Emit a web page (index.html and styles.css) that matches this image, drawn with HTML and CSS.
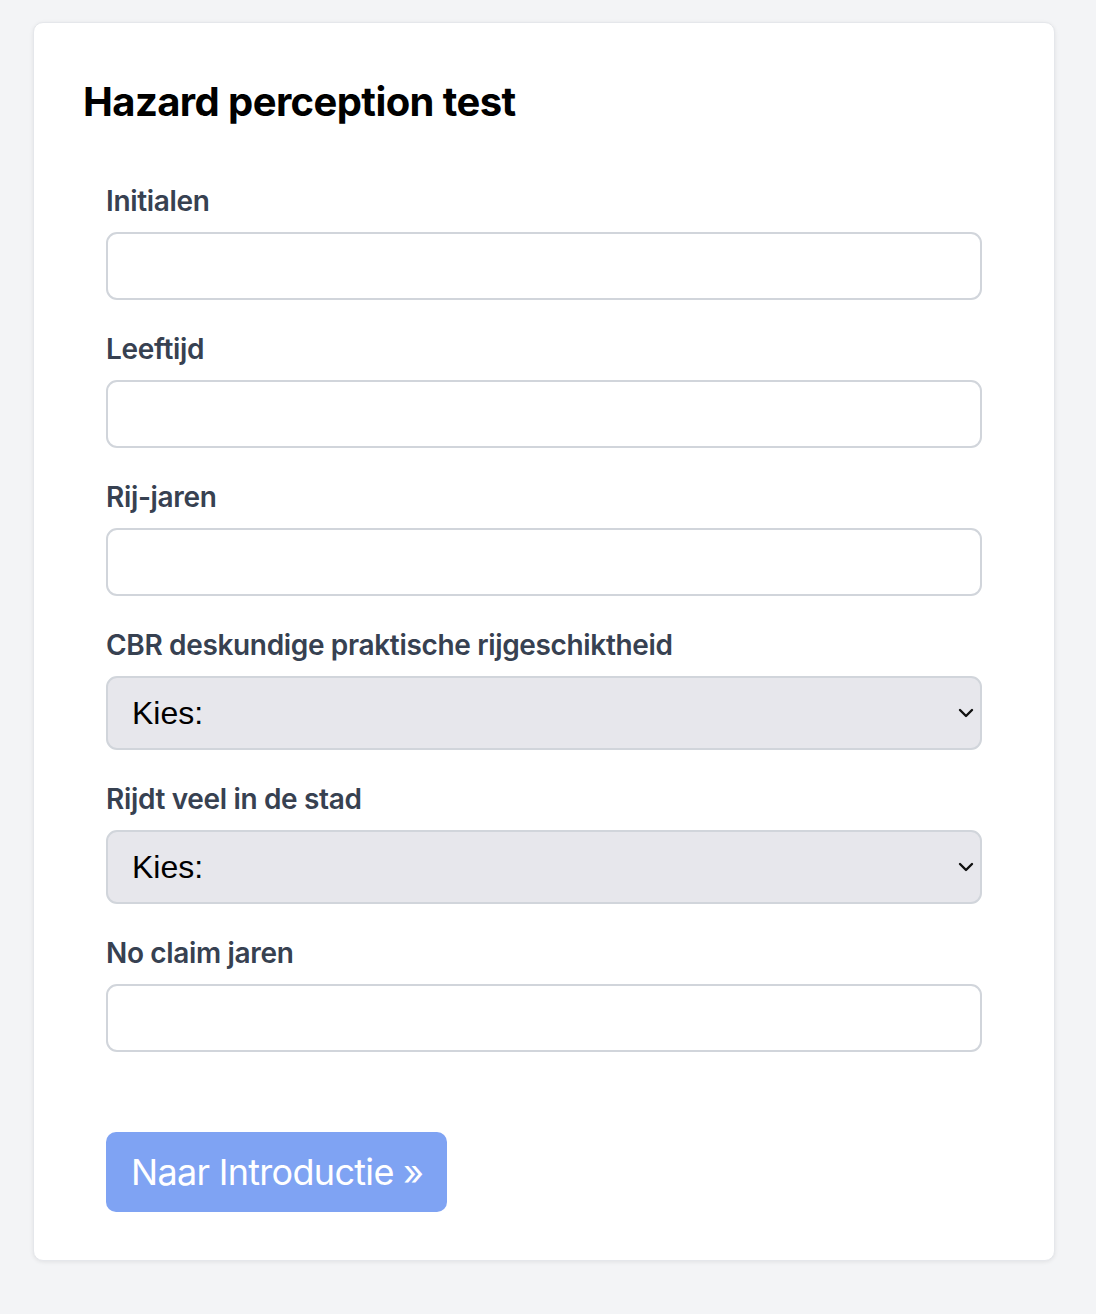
FILE: index.html
```html
<!DOCTYPE html>
<html lang="nl">
<head>
<meta charset="utf-8">
<title>Hazard perception test</title>
<link rel="stylesheet" href="styles.css">
</head>
<body>
<main class="page">
  <section class="card">
    <h1 class="title">Hazard perception test</h1>
    <form class="form">
      <div class="field">
        <label class="label" for="initialen">Initialen</label>
        <input class="input" id="initialen" type="text">
      </div>
      <div class="field">
        <label class="label" for="leeftijd">Leeftijd</label>
        <input class="input" id="leeftijd" type="text">
      </div>
      <div class="field">
        <label class="label" for="rijjaren">Rij-jaren</label>
        <input class="input" id="rijjaren" type="text">
      </div>
      <div class="field">
        <label class="label" for="cbr">CBR deskundige praktische rijgeschiktheid</label>
        <div class="select-wrap">
          <select class="select" id="cbr"><option>Kies:</option></select>
          <svg class="chevron" width="16" height="10" viewBox="0 0 16 10"><path d="M2 2 L8 8 L14 2" fill="none" stroke="#111" stroke-width="2.4" stroke-linecap="round" stroke-linejoin="round"/></svg>
        </div>
      </div>
      <div class="field">
        <label class="label" for="stad">Rijdt veel in de stad</label>
        <div class="select-wrap">
          <select class="select" id="stad"><option>Kies:</option></select>
          <svg class="chevron" width="16" height="10" viewBox="0 0 16 10"><path d="M2 2 L8 8 L14 2" fill="none" stroke="#111" stroke-width="2.4" stroke-linecap="round" stroke-linejoin="round"/></svg>
        </div>
      </div>
      <div class="field">
        <label class="label" for="noclaim">No claim jaren</label>
        <input class="input" id="noclaim" type="text">
      </div>
      <div class="actions">
        <button class="button" type="button" disabled>Naar Introductie »</button>
      </div>
    </form>
  </section>
</main>
</body>
</html>
```
FILE: styles.css
```css
html, body {
  margin: 0;
  padding: 0;
  background: #f3f4f6;
}
body {
  font-family: Inter, "Noto Sans", sans-serif;
  height: 1314px;
}
.page {
  padding: 22px 41px 0 33px;
}
.card {
  box-sizing: border-box;
  width: 1022px;
  background: #fff;
  border: 1px solid #e5e7eb;
  border-radius: 10px;
  box-shadow: 0 1px 4px rgba(0,0,0,0.08);
  padding: 51px 46px 48px 46px;
}
.title {
  margin: 0 0 51px 3px;
  font-size: 40px;
  line-height: 56px;
  font-weight: 700;
  color: #000;
  letter-spacing: -0.6px;
}
.form {
  padding: 0 26px;
  display: flex;
  flex-direction: column;
}
.field {
  display: flex;
  flex-direction: column;
  margin-bottom: 29px;
}
.label {
  font-size: 28px;
  line-height: 40px;
  font-weight: 600;
  color: #374151;
  margin-bottom: 11px;
  letter-spacing: -0.34px;
}
.input {
  box-sizing: border-box;
  height: 68px;
  width: 100%;
  border: 2px solid #d1d5db;
  border-radius: 11px;
  background: #fff;
  padding: 0 24px;
  font-size: 28px;
  outline: none;
}
.select-wrap {
  position: relative;
}
.select {
  box-sizing: border-box;
  width: 100%;
  height: 74px;
  -webkit-appearance: none;
  appearance: none;
  border: 2px solid #d1d5db;
  border-radius: 11px;
  background: #e7e7ec;
  padding: 0 24px;
  font-family: "Liberation Sans", Arial, sans-serif;
  font-size: 32px;
  color: #000;
  outline: none;
}
.chevron {
  position: absolute;
  right: 8px;
  top: 32px;
  pointer-events: none;
}
.actions {
  margin-top: 51px;
  display: flex;
}
.button {
  height: 80px;
  padding: 0 24px 0 25px;
  border: none;
  border-radius: 10px;
  background: #7fa3f3;
  color: #fff;
  font-family: Inter, "Noto Sans", sans-serif;
  font-size: 36px;
  font-weight: 400;
  letter-spacing: -0.7px;
}
```
